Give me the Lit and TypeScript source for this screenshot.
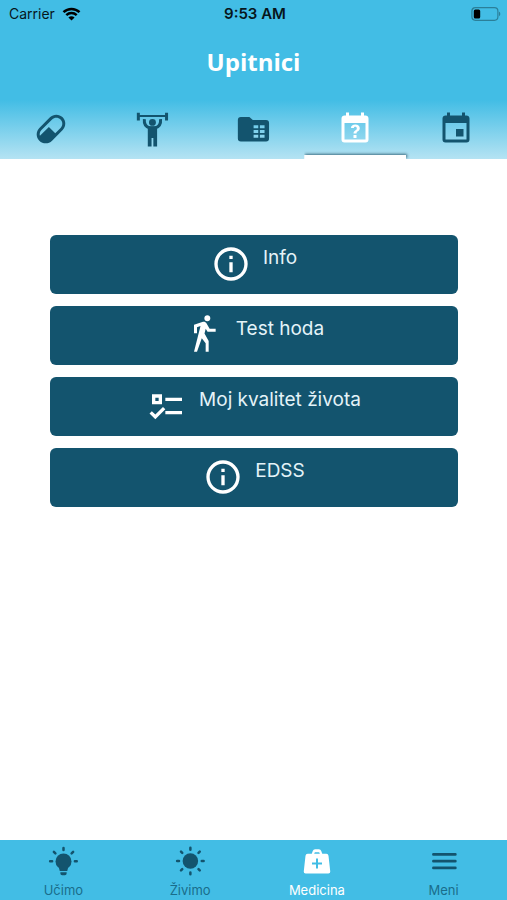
import { LitElement, html, css, svg } from "lit";
import { customElement, property, state } from "lit/decorators.js";
import { classMap } from "lit/directives/class-map.js";

const icons = {
  pill: svg`<path d="M4.22,11.29L11.29,4.22C13.64,1.88 17.43,1.88 19.78,4.22C22.12,6.56 22.12,10.36 19.78,12.71L12.71,19.78C10.36,22.12 6.56,22.12 4.22,19.78C1.88,17.43 1.88,13.64 4.22,11.29M5.64,12.71C4.59,13.75 4.24,15.24 4.6,16.57L10.59,10.59L14.83,14.83L18.36,11.29C19.93,9.73 19.93,7.2 18.36,5.64C16.8,4.07 14.27,4.07 12.71,5.64L5.64,12.71Z"/>`,
  lifter: svg`<path d="M1.9,1.2H3.9V2.7H20.7V1.2H22.7V6.3H20.7V4H3.9V6.3H1.9Z"/><circle cx="12.300" cy="7.600" r="2.300"/><path d="M6.900,5.400C6.600,8.600 7.800,10.400 10.300,11.200H14.300C16.800,10.400 18,8.600 17.700,5.400" fill="none" stroke="currentColor" stroke-width="2"/><path d="M9.200,10.400H15.400V23.600H12.900V18H11.700V23.600H9.200Z"/>`,
  folder: svg`<path fill-rule="evenodd" d="M3.900,4H9.600L11.900,6H20.700A2,2 0 0 1 22.700,8V18.300A2,2 0 0 1 20.700,20.300H3.900A2,2 0 0 1 1.900,18.300V6A2,2 0 0 1 3.900,4ZM12.400,9.500V11.500H15.500V9.500ZM16.600,9.500V11.500H19.700V9.500ZM12.400,12.700V14.700H15.500V12.700ZM16.600,12.700V14.700H19.700V12.700ZM12.400,15.900V17.900H15.500V15.900ZM16.600,15.900V17.900H19.700V15.900Z"/>`,
  question: svg`<path d="M6,1V3H5C3.89,3 3,3.89 3,5V19A2,2 0 0,0 5,21H19A2,2 0 0,0 21,19V5C21,3.89 20.1,3 19,3H18V1H16V3H8V1H6M5,8H19V19H5V8M12.19,9C11.32,9 10.62,9.2 10.08,9.59C9.56,10 9.3,10.57 9.31,11.36L9.32,11.39H11.25C11.26,11.09 11.35,10.86 11.53,10.7C11.71,10.55 11.93,10.47 12.19,10.47C12.5,10.47 12.76,10.57 12.94,10.75C13.12,10.94 13.2,11.2 13.2,11.5C13.2,11.82 13.13,12.09 12.97,12.32C12.83,12.55 12.62,12.75 12.36,12.91C11.85,13.25 11.5,13.55 11.31,13.82C11.11,14.08 11,14.5 11,15H13C13,14.69 13.04,14.44 13.13,14.26C13.22,14.08 13.39,13.9 13.64,13.74C14.09,13.5 14.46,13.21 14.75,12.81C15.04,12.41 15.19,12 15.19,11.5C15.19,10.74 14.92,10.13 14.38,9.68C13.85,9.23 13.12,9 12.19,9M11,16V18H13V16H11Z"/>`,
  calendar: svg`<path d="M19,19H5V8H19M16,1V3H8V1H6V3H5C3.89,3 3,3.89 3,5V19A2,2 0 0,0 5,21H19A2,2 0 0,0 21,19V5C21,3.89 20.1,3 19,3H18V1M17,12H12V17H17V12Z"/>`,
  info: svg`<path d="M11,9H13V7H11M12,20C7.59,20 4,16.41 4,12C4,7.59 7.59,4 12,4C16.41,4 20,7.59 20,12C20,16.41 16.41,20 12,20M12,2A10,10 0 0,0 2,12A10,10 0 0,0 12,22A10,10 0 0,0 22,12A10,10 0 0,0 12,2M11,17H13V11H11V17Z"/>`,
  walk: svg`<path d="M14.12,10H19V8.2H15.38L13.38,4.87C13.08,4.37 12.54,4.03 11.92,4.03C11.74,4.03 11.58,4.06 11.42,4.11L6,5.8V11H7.8V7.33L9.91,6.67L6,22H7.8L10.67,13.89L13,17V22H14.8V15.59L12.31,11.05L13.04,8.18M14,3.8C15,3.8 15.8,3 15.8,2C15.8,1 15,0.2 14,0.2C13,0.2 12.2,1 12.2,2C12.2,3 13,3.8 14,3.8Z"/>`,
  checks: svg`<path d="M3,5H9V11H3V5M5,7V9H7V7H5M11,7H21V9H11V7M11,15H21V17H11V15M5,20L1.5,16.5L2.91,15.09L5,17.17L9.59,12.59L11,14L5,20Z"/>`,
  bulb: svg`<circle cx="12.400" cy="12.300" r="6.400"/><path d="M8.400,16L9.400,20H15.400L16.400,16ZM9.900,21H14.900V22A1.400,1.400 0 0 1 13.500,23.400H11.300A1.400,1.400 0 0 1 9.900,22Z"/><path d="M12.400,1.500V3.200M4.700,4.700L5.900,5.900M20.100,4.700L18.900,5.900M1.700,12.200H3.300M21.500,12.200H23" fill="none" stroke="currentColor" stroke-width="2" stroke-linecap="round"/>`,
  sun: svg`<circle cx="12.300" cy="12" r="6.200"/><path d="M12.300,1.400V2.900M12.300,21.100V22.600M1.700,12H3.200M21.400,12H22.900M4.800,4.500L5.800,5.500M19.800,4.500L18.800,5.500M4.800,19.500L5.800,18.500M19.800,19.500L18.800,18.500" fill="none" stroke="currentColor" stroke-width="2" stroke-linecap="round"/>`,
  kit: svg`<path fill-rule="evenodd" d="M7.800,6.200L8.600,3.900A2,2 0 0 1 10.500,2.600H13.500A2,2 0 0 1 15.400,3.900L16.200,6.200H19.500A1.800,1.800 0 0 1 21.200,7.700L22.600,20.400A1.500,1.500 0 0 1 21.100,22H2.900A1.500,1.500 0 0 1 1.400,20.400L2.800,7.700A1.800,1.800 0 0 1 4.500,6.200ZM9.700,6.200H14.300L13.700,4.900H10.300ZM11.200,10V13.200H8V14.800H11.200V18H12.800V14.800H16V13.200H12.800V10Z"/>`,
  menu: svg`<path d="M3.500,6.700H21.100M3.500,12.100H21.100M3.500,17.500H21.100" fill="none" stroke="currentColor" stroke-width="2.100" stroke-linecap="round"/>`,
};
type IconName = keyof typeof icons;

@customElement("app-icon")
class AppIcon extends LitElement {
  static styles = css`
    :host { display: block; flex: none; }
    .glyph { display: block; width: 100%; height: 100%; fill: currentColor; }
  `;
  @property() name: IconName = "info";
  render() {
    return html`<svg class="glyph" viewBox="0 0 24 24" aria-hidden="true">${icons[this.name]}</svg>`;
  }
}

@customElement("status-bar")
class StatusBar extends LitElement {
  static styles = css`
    :host {
      display: grid; grid-template-columns: 1fr auto 1fr; align-items: center;
      height: 28px; padding: 0 6px 0 9px; color: #07161c;
      font: 14px/28px Inter, sans-serif;
    }
    .carrier { display: flex; align-items: center; gap: 7px; }
    .wifi { width: 19px; height: 14px; }
    .time { font-size: 15px; font-weight: 600; }
    .battery { justify-self: end; width: 30px; height: 14px; }
  `;
  render() {
    return html`
      <div class="carrier">
        <span>Carrier</span>
        <svg class="wifi" viewBox="0 0 19 14" aria-hidden="true">
          <path d="M1.500,5.200C6,.800 13,.800 17.500,5.200M4.300,8.200C7.300,5.400 11.700,5.400 14.700,8.200" fill="none" stroke="#000" stroke-width="2.500"/>
          <path d="M9.500,13.600L6.400,10.400C8.200,8.900 10.800,8.900 12.600,10.400Z"/>
        </svg>
      </div>
      <span class="time">9:53 AM</span>
      <svg class="battery" viewBox="0 0 30 14" aria-hidden="true">
        <rect x=".900" y=".700" width="26" height="12.600" rx="3.500" fill="none" stroke="#2b7f99" stroke-width="1.200"/>
        <path d="M28,4.800C29.700,5.300 29.700,8.700 28,9.200Z" fill="#2b7f99"/>
        <rect x="2.800" y="2.500" width="6.400" height="9" rx="1.500"/>
      </svg>`;
  }
}

@customElement("app-root")
class AppRoot extends LitElement {
  static styles = css`
    :host {
      display: flex; flex-direction: column; min-height: 100vh;
      background: #fff; color: #13546e; font-family: Inter, sans-serif;
    }
    button { margin: 0; border: 0; font: inherit; color: inherit; cursor: pointer; }
    .top { background: linear-gradient(#42bde5 100px, #b5e3f3); }
    .title {
      margin: 0; padding: 16px 0 20px; text-align: center; color: #fff;
      font: 700 24px/36px "Open Sans", sans-serif;
    }
    .tabs { display: grid; grid-template-columns: repeat(5, 1fr); }
    .tab {
      position: relative; display: flex; justify-content: center;
      height: 59px; padding: 11px 0 0; background: none;
    }
    .tab app-icon { width: 36px; height: 36px; }
    .tab.active { color: #fff; }
    .tab.active::after {
      content: ""; position: absolute; left: 0; right: 0; bottom: 0; height: 4px;
      background: #fff; box-shadow: 1px -1px 3px #3b6c80; clip-path: inset(-4px -6px 0 0);
    }
    .content { flex: 1; display: flex; flex-direction: column; gap: 12px; padding: 76px 49px 24px 50px; }
    .action {
      display: flex; justify-content: center; align-items: flex-start; gap: 12px;
      height: 59px; padding: 9px 16px; border-radius: 6px;
      background: #13546e; color: #fff;
    }
    .action app-icon { width: 40px; height: 40px; }
    .label { font-size: 19px; line-height: 28px; color: #e4f3f8; }
    .bottom { display: grid; grid-template-columns: repeat(4, 1fr); background: #42bde5; }
    .item {
      display: flex; flex-direction: column; align-items: center; gap: 4px;
      height: 60px; padding: 6px 0 0; background: none; color: #13546e;
      font-size: 13px; line-height: 20px;
    }
    .item app-icon { width: 30px; height: 30px; }
    .item .caption { color: #1a6d8b; }
    .item.active, .item.active .caption { color: #fff; }
  `;

  @state() private tab = 3;
  @state() private section = 2;

  private tabs: [IconName, string][] = [
    ["pill", "Lijekovi"], ["lifter", "Vježbe"], ["folder", "Nalazi"],
    ["question", "Upitnici"], ["calendar", "Kalendar"],
  ];
  private actions: [IconName, string][] = [
    ["info", "Info"], ["walk", "Test hoda"], ["checks", "Moj kvalitet života"], ["info", "EDSS"],
  ];
  private sections: [IconName, string][] = [
    ["bulb", "Učimo"], ["sun", "Živimo"], ["kit", "Medicina"], ["menu", "Meni"],
  ];

  render() {
    return html`
      <header class="top">
        <status-bar></status-bar>
        <h1 class="title">Upitnici</h1>
        <nav class="tabs">
          ${this.tabs.map(([icon, name], i) => html`
            <button class=${classMap({ tab: true, active: i === this.tab })} aria-label=${name}
              @click=${() => (this.tab = i)}><app-icon .name=${icon}></app-icon></button>`)}
        </nav>
      </header>
      <main class="content">
        ${this.actions.map(([icon, label]) => html`
          <button class="action"><app-icon .name=${icon}></app-icon><span class="label">${label}</span></button>`)}
      </main>
      <nav class="bottom">
        ${this.sections.map(([icon, label], i) => html`
          <button class=${classMap({ item: true, active: i === this.section })}
            @click=${() => (this.section = i)}><app-icon .name=${icon}></app-icon><span class="caption">${label}</span></button>`)}
      </nav>`;
  }
}
